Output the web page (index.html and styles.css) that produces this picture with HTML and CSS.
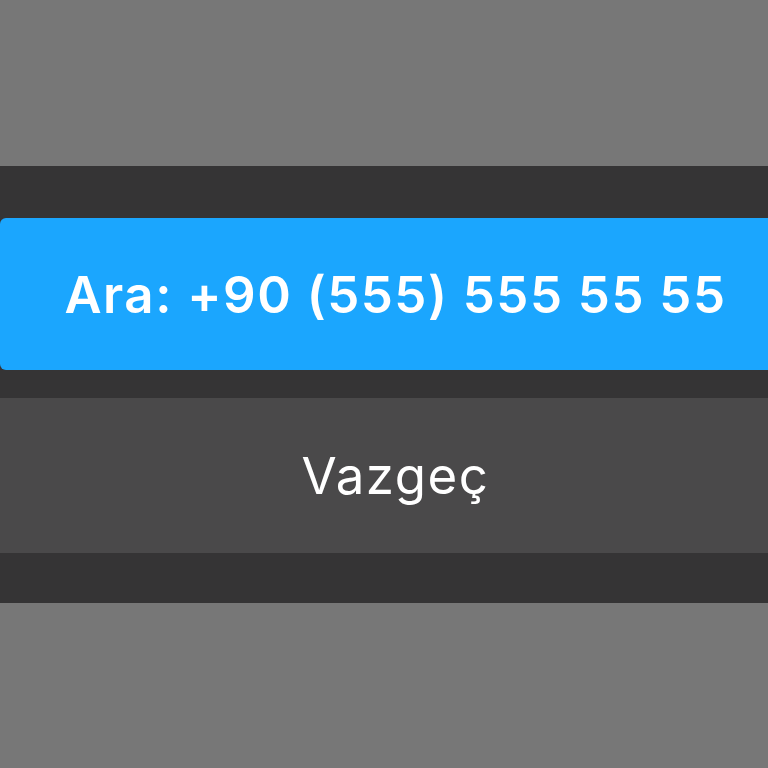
FILE: index.html
```html
<!DOCTYPE html>
<html lang="tr">
<head>
<meta charset="utf-8">
<link rel="stylesheet" href="styles.css">
</head>
<body>
<div class="backdrop"></div>
<div class="sheet">
  <div class="btn btn-call">Ara: +90 (555) 555 55 55</div>
  <div class="btn btn-cancel">Vazgeç</div>
</div>
</body>
</html>
```
FILE: styles.css
```css
html, body {
  margin: 0;
  padding: 0;
  background: #777777;
  width: 768px;
  height: 768px;
  overflow: hidden;
}
.backdrop {
  height: 166px;
}
.sheet {
  background: #353435;
  padding: 52px 0 50px;
  display: flex;
  flex-direction: column;
  gap: 28px;
}
.btn {
  display: flex;
  align-items: center;
  justify-content: center;
  padding-left: 23px;
  color: #ffffff;
  font-family: Inter, "Liberation Sans", sans-serif;
  font-size: 51px;
  line-height: 1;
  letter-spacing: 1.5px;
}
.btn-call {
  height: 152px;
  background: #1ba6fe;
  font-weight: 600;
  border-radius: 6px 0 0 6px;
}
.btn-cancel {
  height: 155px;
  background: #4a494a;
  font-weight: 400;
}
```
